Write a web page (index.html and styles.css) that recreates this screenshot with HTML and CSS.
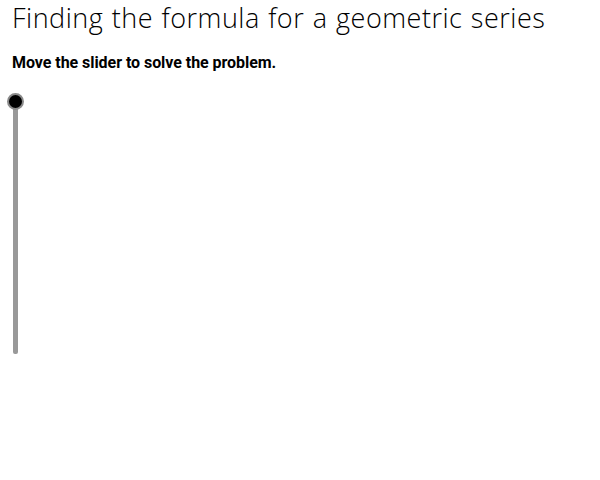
FILE: index.html
```html
<!DOCTYPE html>
<html lang="en">
<head>
    <meta charset="UTF-8">
    <meta name="viewport" content="width=device-width, initial-scale=1.0">
    <title>Finding the formula for a geometric series</title>
    <link rel="stylesheet" href="styles.css">
</head>
<body>
    <h1 class="title">Finding the formula for a geometric series</h1>
    <p class="hint">Move the slider to solve the problem.</p>

    <div class="applet">
        <div class="slider">
            <div class="track"></div>
            <div class="knob"></div>
        </div>
    </div>
</body>
</html>
```

FILE: styles.css
```css
body {
    margin: 0;
    padding: 0 12px;
    background: #fff;
    color: #000;
}
.title {
    font-family: "Open Sans", "DejaVu Sans", sans-serif;
    font-weight: 300;
    font-size: 27px;
    line-height: 36px;
    margin: 0;
    letter-spacing: 0.5px;
    word-spacing: 1px;
}
.hint {
    font-family: Roboto, "Liberation Sans", sans-serif;
    font-weight: 700;
    font-size: 16px;
    line-height: 20px;
    margin: 17px 0 0;
    letter-spacing: -0.05px;
}
.applet {
    margin-top: 20px;
    height: 280px;
}
.slider {
    position: relative;
    width: 20px;
    height: 270px;
}
.track {
    position: absolute;
    left: 1px;
    top: 8px;
    width: 5px;
    height: 253px;
    background: #999;
    border-radius: 0 0 2px 2px;
}
.knob {
    position: absolute;
    left: -5px;
    top: 0;
    width: 13px;
    height: 13px;
    background: #000;
    border-radius: 50%;
    border: 2px solid #8a8a8a;
}
```
